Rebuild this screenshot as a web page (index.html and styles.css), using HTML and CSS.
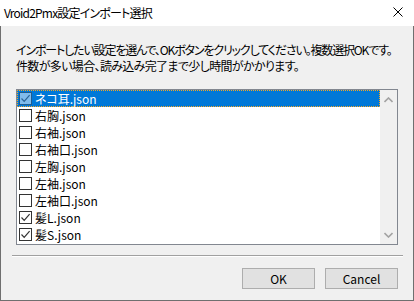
FILE: index.html
```html
<!DOCTYPE html>
<html lang="ja">
<head>
    <meta charset="UTF-8">
    <meta name="viewport" content="width=device-width, initial-scale=1.0">
    <title>Vroid2Pmx設定インポート選択</title>
    <link rel="stylesheet" href="styles.css">
</head>
<body>

<div class="window">
    <div class="titlebar">
        <span class="title">Vroid2Pmx設定インポート選択</span>
        <svg class="close" width="10" height="10" viewBox="0 0 10 10">
            <path d="M0.5 0.5 L9.5 9.5 M9.5 0.5 L0.5 9.5" stroke="#000" stroke-width="1" fill="none"/>
        </svg>
    </div>

    <div class="client">
        <div class="message">
            <span class="line line-1">インポートしたい設定を選んで、OKボタンをクリックしてください。複数選択OKです。</span>
            <span class="line line-2">件数が多い場合、読み込み完了まで少し時間がかかります。</span>
        </div>

        <div class="listbox">
            <ul class="items" id="items"></ul>
            <div class="scrollbar">
                <svg width="9" height="6" viewBox="0 0 9 6"><path d="M0.5 5 L4.5 1 L8.5 5" stroke="#a3a3a3" stroke-width="1.6" fill="none"/></svg>
                <svg width="9" height="6" viewBox="0 0 9 6"><path d="M0.5 1 L4.5 5 L8.5 1" stroke="#a3a3a3" stroke-width="1.6" fill="none"/></svg>
            </div>
        </div>

        <div class="separator"></div>

        <div class="buttons">
            <button class="btn">OK</button>
            <button class="btn">Cancel</button>
        </div>
    </div>
</div>

<script>
    // 設定ファイル一覧
    const files = [
        { name: 'ネコ耳.json', checked: true, selected: true },
        { name: '右胸.json', checked: false },
        { name: '右袖.json', checked: false },
        { name: '右袖口.json', checked: false },
        { name: '左胸.json', checked: false },
        { name: '左袖.json', checked: false },
        { name: '左袖口.json', checked: false },
        { name: '髪L.json', checked: true },
        { name: '髪S.json', checked: true }
    ];

    const mark = '<svg width="11" height="11" viewBox="0 0 11 11"><path d="M1.5 5.5 L4.2 8.3 L9.6 2.2" stroke="currentColor" stroke-width="1.2" fill="none"/></svg>';

    const list = document.getElementById('items');
    files.forEach(f => {
        const li = document.createElement('li');
        li.className = 'item' + (f.selected ? ' selected' : '');
        li.innerHTML = `<span class="check">${f.checked ? mark : ''}</span><span class="label">${f.name}</span>`;
        list.appendChild(li);
    });
</script>

</body>
</html>
```

FILE: styles.css
```css
body {
    margin: 0;
    padding: 0;
    font-family: "Noto Sans CJK JP", sans-serif;
    font-size: 12px;
    color: #000;
    background-color: #f0f0f0;
}
.window {
    width: 414px;
    height: 301px;
    box-sizing: border-box;
    display: flex;
    flex-direction: column;
    background-color: #f0f0f0;
    overflow: hidden;
}
.titlebar {
    height: 26px;
    flex-shrink: 0;
    background-color: #fff;
    display: flex;
    align-items: center;
    justify-content: space-between;
    padding: 0 11px 0 4px;
}
.title {
    font-feature-settings: "palt";
    letter-spacing: -0.8px;
    line-height: 16px;
    margin-top: -1px;
}
.close {
    display: block;
    margin-top: -2px;
}
.client {
    flex-grow: 1;
    border: 1px solid #6f6f6f;
    border-top: none;
    padding: 16px 0 0 15px;
}
.message {
    line-height: 16px;
    font-feature-settings: "palt";
    white-space: nowrap;
}
.line {
    display: block;
}
.line-1 {
    letter-spacing: -1.15px;
}
.line-2 {
    letter-spacing: -0.65px;
}
.listbox {
    margin-top: 15px;
    width: 382px;
    height: 156px;
    box-sizing: border-box;
    border: 1px solid #828790;
    background-color: #fff;
    display: flex;
}
.items {
    list-style: none;
    margin: 0;
    padding: 0;
    flex-grow: 1;
}
.item {
    height: 17px;
    display: flex;
    align-items: center;
    padding-left: 2px;
    box-sizing: border-box;
}
.item.selected {
    background-color: #0078d7;
    color: #fff;
    outline: 1px dotted #f5a623;
    outline-offset: -1px;
}
.check {
    width: 13px;
    height: 13px;
    box-sizing: border-box;
    border: 1px solid #333;
    background-color: #fff;
    color: #333;
    display: flex;
    align-items: center;
    justify-content: center;
    margin-right: 3px;
}
.selected .check {
    background-color: #7fbbeb;
    border-color: #1f5c8f;
    color: #2a6496;
}
.label {
    line-height: 16px;
    font-feature-settings: "palt";
}
.scrollbar {
    width: 17px;
    background-color: #f0f0f0;
    display: flex;
    flex-direction: column;
    justify-content: space-between;
    align-items: center;
    padding: 7px 0 6px;
    box-sizing: border-box;
}
.scrollbar svg {
    display: block;
}
.separator {
    margin: 10px 0 0 -4px;
    width: 391px;
    height: 1px;
    background-color: #a0a0a0;
    border-bottom: 1px solid #fff;
}
.buttons {
    display: flex;
    justify-content: flex-end;
    gap: 10px;
    margin-top: 11px;
    padding-right: 15px;
}
.btn {
    width: 73px;
    height: 21px;
    padding: 0;
    background-color: #e1e1e1;
    border: 1px solid #adadad;
    border-radius: 0;
    font-family: "Noto Sans CJK JP", sans-serif;
    font-size: 12px;
    color: #000;
    line-height: 18px;
}
```
